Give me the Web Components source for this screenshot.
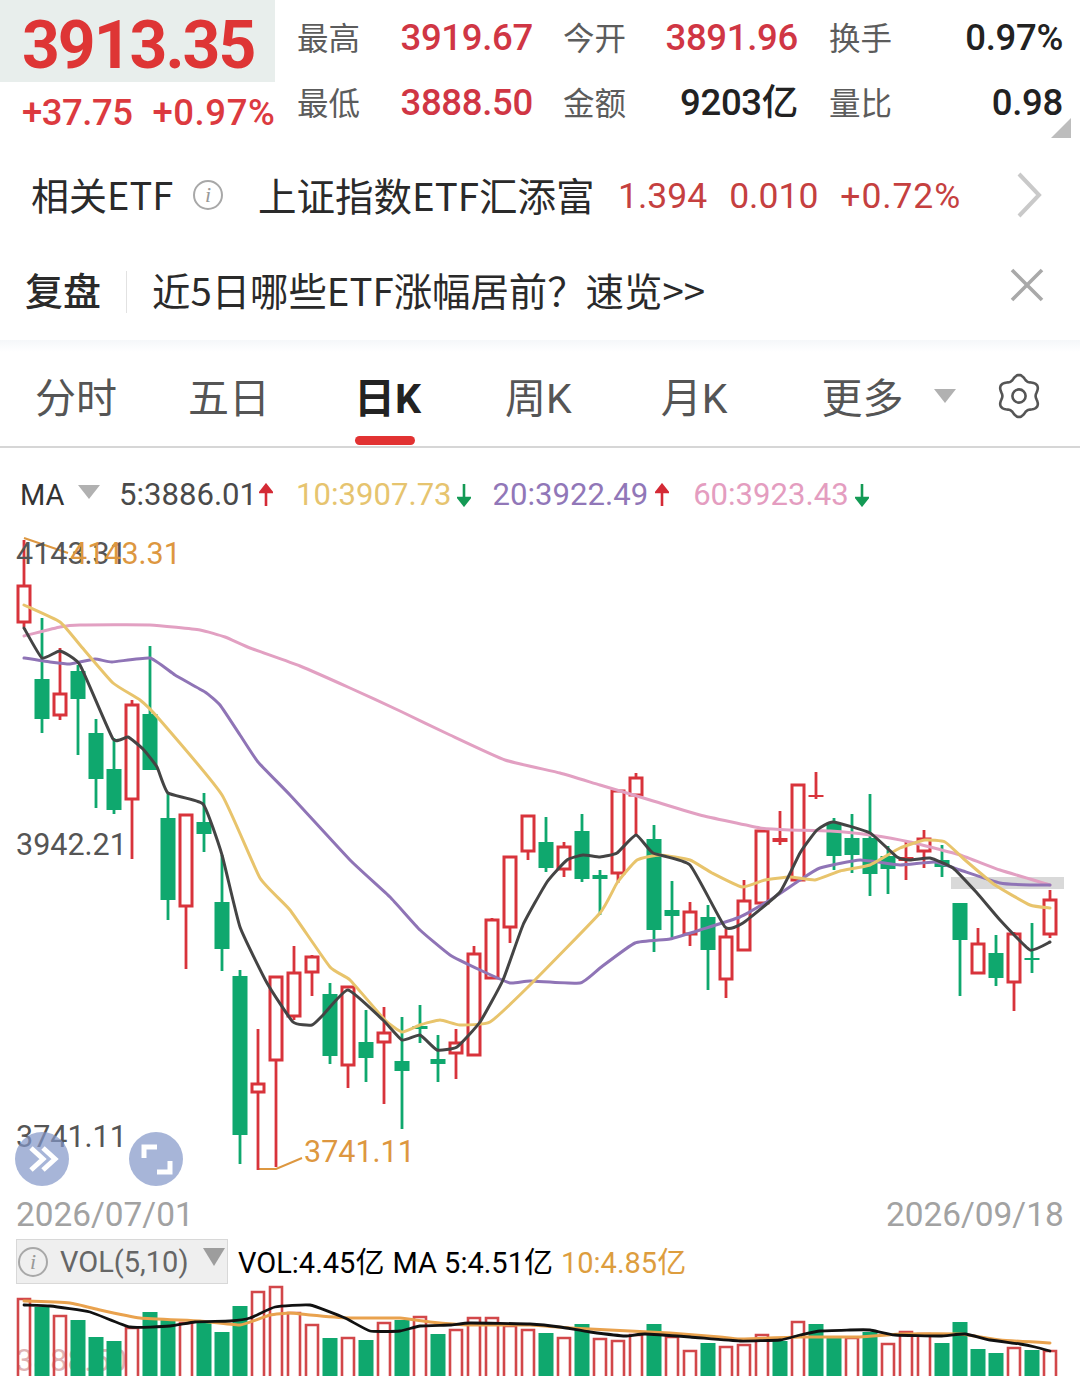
<!DOCTYPE html>
<html lang="zh">
<head>
<meta charset="utf-8">
<title>上证指数</title>
<style>
    html, body {
        margin: 0;
        background: #fff;
        width: 1080px;
        height: 1376px;
        overflow: hidden;
        font-family: Roboto, "Noto Sans CJK SC", sans-serif;
    }
    quote-panel, link-row, period-tabs, ma-legend, kline-chart, vol-legend, vol-chart { width: 1080px; }
</style>
</head>
<body>
    <quote-panel></quote-panel>
    <link-row kind="etf" label="相关ETF" name="上证指数ETF汇添富">
        <span>1.394</span><span>0.010</span><span class="wide">+0.72%</span>
    </link-row>
    <link-row kind="review" label="复盘" name="近5日哪些ETF涨幅居前？速览&gt;&gt;"></link-row>
    <period-tabs></period-tabs>
    <ma-legend></ma-legend>
    <kline-chart>
        <chart-label x="16" y="6" color="#555">4143.31</chart-label>
        <chart-label x="70" y="6" color="#dd9740">4143.31</chart-label>
        <chart-label x="16" y="297" color="#555">3942.21</chart-label>
        <chart-label x="16" y="589" color="#555">3741.11</chart-label>
        <chart-label x="304" y="604" color="#dd9740">3741.11</chart-label>
        <chart-label x="16" y="667" color="#a2a2a2" size="33.4">2026/07/01</chart-label>
        <chart-label x="886" y="667" color="#a2a2a2" size="33.4">2026/09/18</chart-label>
        <round-button x="15" y="604" icon="forward"></round-button>
        <round-button x="129" y="604" icon="expand"></round-button>
    </kline-chart>
    <vol-legend></vol-legend>
    <vol-chart></vol-chart>

<script>
// Helper variables.
const RED = '#d8333b';
const GREEN = '#0fa86e';
const CJK = '"Noto Sans CJK SC", sans-serif';
const NUM = 'Roboto, "Noto Sans CJK SC", sans-serif';

// x of candle i is 24 + 18 * i. [kind, bodyTop, bodyBottom, wickTop, wickBottom]
const candles = [
    ['r',586,622,540,627],['g',679,719,618,733],['r',694,715,648,720],['g',671,699,665,755],
    ['g',733,779,719,808],['g',769,810,738,814],['r',705,799,700,859],['g',714,770,646,770],
    ['g',818,900,792,920],['r',815,906,815,969],['g',822,834,793,852],['g',902,949,855,971],
    ['g',976,1135,970,1164],['r',1084,1092,1029,1170],['r',977,1060,977,1167],['r',973,1016,946,1020],
    ['r',957,972,955,996],['g',994,1056,983,1064],['r',987,1065,987,1088],['g',1042,1058,1010,1082],
    ['r',1033,1042,1007,1104],['g',1061,1071,1017,1129],['g',1026,1029,1005,1043],['g',1059,1064,1035,1082],
    ['r',1043,1053,1029,1079],['r',954,1055,946,1055],['r',920,978,918,978],['r',857,927,857,943],
    ['r',816,851,816,860],['g',842,868,817,872],['r',847,869,842,877],['g',831,879,814,882],
    ['g',875,879,870,915],['r',791,873,791,883],['r',778,795,773,835],['g',839,930,825,952],
    ['g',910,916,881,937],['r',912,934,902,946],['g',917,950,905,990],['r',937,979,929,998],
    ['r',901,950,880,950],['r',831,903,831,903],['r',838,842,811,845],['r',785,880,785,880],
    ['r',795,797,772,799],['g',823,856,818,870],['g',838,855,814,873],['g',838,874,794,896],
    ['g',856,869,846,894],['r',857,861,842,880],['r',839,851,830,868],['g',860,867,845,877],
    ['g',903,940,903,996],['r',944,973,928,973],['g',953,978,935,986],['r',934,982,932,1011],
    ['g',958,960,923,973],['r',900,934,890,938]
];

const maLines = [
    { color: '#e2a0c2', points: [[24,636],[60,627],[80,625],[150,625],[200,630],[225,637],[250,648],[300,666],[350,688],[400,711],[450,735],[505,760],[560,773],[600,785],[650,800],[700,815],[760,828],[790,830],[830,831],[870,835],[910,842],[960,855],[1000,870],[1050,885]] },
    { color: '#8f74b6', points: [[24,658],[50,662],[70,664],[95,659],[112,662],[150,658],[175,675],[205,692],[220,705],[240,735],[258,762],[290,795],[350,860],[390,897],[420,930],[450,955],[480,970],[510,983],[530,981],[580,983],[600,968],[635,943],[670,939],[700,930],[740,917],[770,900],[800,880],[820,868],[860,860],[900,865],[935,862],[960,870],[1000,883],[1030,885],[1050,885]] },
    { color: '#e8c46c', points: [[24,605],[60,622],[80,645],[113,683],[140,700],[160,720],[222,795],[260,878],[290,910],[330,967],[350,980],[385,1020],[402,1032],[420,1025],[440,1020],[460,1025],[490,1022],[530,985],[600,913],[617,883],[637,860],[660,855],[690,860],[712,873],[742,887],[765,880],[790,877],[815,880],[840,871],[870,865],[900,848],[925,840],[945,842],[965,860],[995,885],[1030,905],[1050,908]] },
    { color: '#444444', points: [[24,628],[42,658],[60,651],[80,665],[113,739],[128,737],[143,749],[157,767],[168,793],[203,804],[222,855],[240,927],[267,983],[293,1022],[312,1025],[323,1015],[348,990],[383,1020],[402,1040],[420,1035],[437,1050],[457,1047],[480,1022],[503,980],[523,925],[547,882],[567,860],[583,855],[600,857],[617,853],[636,835],[653,853],[690,865],[725,927],[743,923],[780,892],[800,853],[817,830],[833,822],[870,833],[897,857],[910,860],[930,858],[953,868],[977,893],[1000,920],[1030,950],[1050,942]] }
];

// [kind, top] for each volume bar, same x as the candles.
const volumes = [
    ['r',1299],['g',1307],['r',1316],['g',1320],['g',1337],['g',1341],['r',1328],['g',1312],['g',1320],['r',1323],
    ['g',1323],['g',1332],['g',1306],['r',1292],['r',1287],['r',1313],['r',1325],['g',1338],['r',1338],['g',1340],
    ['r',1323],['g',1320],['r',1317],['g',1334],['r',1330],['r',1318],['r',1318],['r',1326],['r',1330],['g',1333],
    ['r',1338],['g',1324],['r',1339],['r',1341],['r',1335],['g',1324],['r',1337],['r',1351],['g',1343],['r',1347],
    ['r',1345],['r',1335],['g',1341],['r',1322],['g',1324],['g',1337],['r',1338],['g',1332],['r',1344],['r',1332],
    ['r',1334],['g',1343],['g',1322],['g',1349],['g',1353],['r',1348],['g',1350],['r',1351]
];

const volLines = [
    { color: '#e9a24e', width: 3, points: [[24,1301],[70,1303],[100,1310],[140,1318],[200,1321],[240,1325],[270,1315],[290,1313],[310,1315],[350,1318],[400,1318],[430,1322],[470,1325],[530,1325],[570,1328],[630,1331],[670,1333],[720,1337],[740,1339],[800,1337],[860,1337],[900,1334],[960,1334],[1000,1340],[1050,1343]] },
    { color: '#111111', width: 2.8, points: [[24,1305],[50,1306],[90,1312],[130,1327],[170,1326],[195,1322],[230,1321],[250,1318],[275,1307],[310,1305],[345,1318],[370,1331],[400,1331],[420,1326],[450,1325],[470,1323],[530,1324],[560,1327],[590,1332],[625,1336],[645,1334],[690,1337],[740,1341],[780,1340],[800,1335],[820,1331],[850,1330],[870,1330],[895,1335],[940,1336],[965,1334],[990,1340],[1020,1344],[1035,1347],[1050,1351]] }
];

// Helper functions.
function smoothLine(points, color, width) {
    // Low tension: the moving averages only round off their corners a little.
    const k = 14;
    let d = `M${points[0].join(' ')}`;
    for (let i = 0; i < points.length - 1; i++) {
        const p0 = points[Math.max(i - 1, 0)];
        const p1 = points[i];
        const p2 = points[i + 1];
        const p3 = points[Math.min(i + 2, points.length - 1)];
        const c1 = [p1[0] + (p2[0] - p0[0]) / k, p1[1] + (p2[1] - p0[1]) / k];
        const c2 = [p2[0] - (p3[0] - p1[0]) / k, p2[1] - (p3[1] - p1[1]) / k];
        d += `C${c1[0].toFixed(1)} ${c1[1].toFixed(1)} ${c2[0].toFixed(1)} ${c2[1].toFixed(1)} ${p2[0]} ${p2[1]}`;
    }
    return `<path d="${d}" fill="none" stroke="${color}" stroke-width="${width}" stroke-linecap="round" stroke-linejoin="round"/>`;
}

function drawCandle(candle, i) {
    const [kind, top, bottom, wickTop, wickBottom] = candle;
    const x = 24 + 18 * i;
    const color = kind === 'r' ? RED : GREEN;
    const wick = `<path d="M${x} ${wickTop}V${top}M${x} ${bottom}V${wickBottom}" stroke="${color}" stroke-width="2.8"/>`;
    if (kind === 'g' || bottom - top < 5) {
        return wick + `<rect x="${x - 7.5}" y="${top}" width="15" height="${bottom - top}" fill="${color}"/>`;
    }
    return wick + `<rect x="${x - 6}" y="${top}" width="12" height="${bottom - top}" fill="none" stroke="${color}" stroke-width="3"/>`;
}

function drawBar(bar, i) {
    const [kind, top] = bar;
    const x = 24 + 18 * i;
    if (kind === 'g') {
        return `<rect x="${x - 7.5}" y="${top}" width="15" height="${1376 - top}" fill="${GREEN}"/>`;
    }
    return `<path d="M${x - 6} 1380V${top}H${x + 6}V1380" fill="none" stroke="#d2474a" stroke-width="2.6"/>`;
}

function gearPath(cx, cy) {
    let d = '';
    for (let i = 0; i <= 120; i++) {
        const a = i / 120 * Math.PI * 2;
        const r = 18.8 - 2.2 * Math.cos(6 * a);
        d += `${i ? 'L' : 'M'}${(cx + r * Math.cos(a)).toFixed(1)} ${(cy + r * Math.sin(a)).toFixed(1)}`;
    }
    return d + 'Z';
}

// Define classes.
class InfoIcon extends HTMLElement {
    constructor() {
        super();
        this.attachShadow({ mode: 'open' }).innerHTML = `
            <style>
                :host {
                    display: inline-flex;
                    width: var(--size, 28px);
                    height: var(--size, 28px);
                    box-sizing: border-box;
                    border: 2px solid #a8a8a8;
                    border-radius: 50%;
                    align-items: center;
                    justify-content: center;
                    background: #fff;
                }
                i { font: italic 22px/1 "Liberation Serif", serif; color: #999; }
            </style>
            <i>i</i>`;
    }
}

class QuotePanel extends HTMLElement {
    constructor() {
        super();
        const cell = (label, value, dark, gap) => `
            <span class="label" style="margin-left:${gap || 0}px">${label}</span>
            <span class="value ${dark ? 'dark' : ''}">${value}</span>`;
        this.attachShadow({ mode: 'open' }).innerHTML = `
            <style>
                :host { display: flex; height: 150px; position: relative; }
                .left { width: 275px; flex: none; }
                .price {
                    height: 82px;
                    background: #e8eeec;
                    box-sizing: border-box;
                    padding-left: 22px;
                    font: 700 66px/92px ${NUM};
                    letter-spacing: -2px;
                    color: #de3535;
                }
                .change {
                    display: flex;
                    gap: 20px;
                    padding: 9px 0 0 22px;
                    font: 500 36.5px/44px ${NUM};
                    letter-spacing: -0.5px;
                    color: #dc3a3f;
                }
                .change span:last-child { letter-spacing: 0.6px; }
                .grid {
                    display: grid;
                    margin: 5px 0 0 22px;
                    grid-template-columns: 64px 172px 94px 171px 95px 170px;
                    grid-auto-rows: 65px;
                    align-items: center;
                }
                .label { font: 400 31.5px/40px ${CJK}; color: #5c5c5c; white-space: nowrap; margin-bottom: 4px; }
                .value {
                    font: 500 36.5px/44px ${NUM};
                    letter-spacing: -0.3px;
                    color: #d03644;
                    text-align: right;
                }
                .value.dark { color: #222; }
                .corner {
                    position: absolute;
                    left: 1051px;
                    top: 118px;
                    width: 20px;
                    height: 20px;
                    background: #bdbdbd;
                    clip-path: polygon(100% 0, 100% 100%, 0 100%);
                }
            </style>
            <div class="left">
                <div class="price">3913.35</div>
                <div class="change"><span>+37.75</span><span>+0.97%</span></div>
            </div>
            <div class="grid">
                ${cell('最高', '3919.67')}${cell('今开', '3891.96', false, 30)}${cell('换手', '0.97%', true, 31)}
                ${cell('最低', '3888.50')}${cell('金额', '9203亿', true, 30)}${cell('量比', '0.98', true, 31)}
            </div>
            <div class="corner"></div>`;
    }
}

class LinkRow extends HTMLElement {
    constructor() {
        super();
        this.attachShadow({ mode: 'open' });
    }
    connectedCallback() {
        const label = this.getAttribute('label');
        const name = this.getAttribute('name').replace('>>', '&gt;&gt;');
        const etf = this.getAttribute('kind') === 'etf';
        this.shadowRoot.innerHTML = etf ? `
            <style>
                :host { display: flex; align-items: center; height: 93px; padding-left: 31px; box-sizing: border-box; color: #2a2a2a; }
                .label { font: 400 38px/48px ${CJK}; width: 162px; white-space: nowrap; margin-bottom: 6px; }
                .name { font: 400 38.5px/48px ${CJK}; margin-left: 35px; white-space: nowrap; width: 360px; margin-bottom: 6px; }
                ::slotted(span) { font: 400 35.5px/48px ${NUM}; color: #c5403f; }
                ::slotted(.wide) { letter-spacing: 0.9px; }
                .values { display: flex; gap: 22px; margin-bottom: 2px; }
                info-icon { --size: 30px; margin-bottom: 4px; }
                svg { position: absolute; left: 1010px; width: 40px; height: 52px; margin-top: -4px; }
            </style>
            <span class="label">${label}</span>
            <info-icon></info-icon>
            <span class="name">${name}</span>
            <div class="values"><slot></slot></div>
            <svg viewBox="0 0 40 52"><polyline points="9,5 29,26 9,47" fill="none" stroke="#c9c9c9" stroke-width="4"/></svg>
        ` : `
            <style>
                :host { display: flex; align-items: center; height: 97px; padding-left: 25px; box-sizing: border-box; color: #2a2a2a; }
                .label { font: 500 38px/48px ${CJK}; width: 76px; white-space: nowrap; margin-bottom: 6px; }
                .rule { width: 1px; height: 42px; background: #e2e2e2; margin: 0 25px 0 25px; }
                .name { font: 400 38.4px/48px ${CJK}; white-space: nowrap; margin-bottom: 6px; }
                svg { position: absolute; left: 1005px; width: 44px; height: 44px; margin-top: -14px; }
            </style>
            <span class="label">${label}</span>
            <span class="rule"></span>
            <span class="name">${name}</span>
            <svg viewBox="0 0 44 44"><path d="M7 7L37 37M37 7L7 37" stroke="#a9a9a9" stroke-width="3.6"/></svg>`;
    }
}

class PeriodTabs extends HTMLElement {
    constructor() {
        super();
        const tab = (text, gap, active) => `<span class="tab ${active ? 'active' : ''}" style="margin-left:${gap}px">${text}</span>`;
        this.attachShadow({ mode: 'open' }).innerHTML = `
            <style>
                :host {
                    display: flex;
                    align-items: center;
                    height: 108px;
                    padding-top: 12px;
                    box-sizing: border-box;
                    border-bottom: 2px solid #d6d6d6;
                    position: relative;
                    background: linear-gradient(#f5f7f9 0, #fff 12px);
                    color: #555;
                }
                .tab { font: 400 41px/56px Roboto, ${CJK}; white-space: nowrap; position: relative; }
                .active { font-weight: 700; color: #222; }
                .active::after {
                    content: "";
                    position: absolute;
                    left: 1px;
                    width: 60px;
                    top: 65px;
                    height: 9px;
                    border-radius: 5px;
                    background: #e23232;
                }
                .caret { width: 0; height: 0; margin-left: 30px; border: 11px solid transparent; border-bottom: 0; border-top: 14px solid #b1b1b1; margin-bottom: 6px; }
                svg { width: 46px; height: 46px; margin-left: 40px; margin-bottom: 6px; }
            </style>
            ${tab('分时', 35)}${tab('五日', 71)}${tab('日K', 84, true)}${tab('周K', 84)}${tab('月K', 89)}${tab('更多', 94)}
            <span class="caret"></span>
            <svg viewBox="0 0 46 46">
                <path d="${gearPath(23, 23)}" fill="none" stroke="#555" stroke-width="2.6"/>
                <circle cx="23" cy="23" r="6.6" fill="none" stroke="#555" stroke-width="2.6"/>
            </svg>`;
    }
}

class MaLegend extends HTMLElement {
    constructor() {
        super();
        const item = (text, color, up, gap, arrowGap) => `
            <span style="color:${color};margin-left:${gap}px">${text}</span>
            <svg class="arrow" style="margin-left:${arrowGap}px" viewBox="0 0 14 24"><path d="M7 ${up ? 23 : 1}V${up ? 3 : 21}M1.5 ${up ? 9 : 15}L7 ${up ? 2 : 22}L12.5 ${up ? 9 : 15}Z" stroke="${up ? '#d42a35' : '#149a55'}" stroke-width="2.6" fill="${up ? '#d42a35' : '#149a55'}"/></svg>`;
        this.attachShadow({ mode: 'open' }).innerHTML = `
            <style>
                :host {
                    display: flex;
                    align-items: center;
                    height: 80px;
                    padding: 14px 0 0 20px;
                    box-sizing: border-box;
                    font: 400 31.1px/40px ${NUM};
                }
                .name { color: #333; font-size: 29px; width: 44px; }
                .caret { width: 0; height: 0; margin-left: 14px; border: 11px solid transparent; border-bottom: 0; border-top: 14px solid #b1b1b1; margin-bottom: 6px; }
                .arrow { width: 14px; height: 24px; flex: none; }
            </style>
            <span class="name">MA</span>
            <span class="caret"></span>
            ${item('5:3886.01', '#4a4a4a', true, 19, 2)}
            ${item('10:3907.73', '#e6c46f', false, 23, 5)}
            ${item('20:3922.49', '#9177b8', true, 22, 7)}
            ${item('60:3923.43', '#e49dc0', false, 24, 6)}`;
    }
}

class ChartLabel extends HTMLElement {
    constructor() {
        super();
        this.attachShadow({ mode: 'open' }).innerHTML = `
            <style>
                :host { position: absolute; white-space: nowrap; font: 400 30.5px/40px ${NUM}; }
            </style>
            <slot></slot>`;
    }
    connectedCallback() {
        this.style.left = this.getAttribute('x') + 'px';
        this.style.top = this.getAttribute('y') + 'px';
        this.style.color = this.getAttribute('color');
        if (this.getAttribute('size')) {
            this.style.fontSize = this.getAttribute('size') + 'px';
        }
    }
}

class RoundButton extends HTMLElement {
    constructor() {
        super();
        this.attachShadow({ mode: 'open' });
    }
    connectedCallback() {
        this.style.left = this.getAttribute('x') + 'px';
        this.style.top = this.getAttribute('y') + 'px';
        const icon = this.getAttribute('icon') === 'forward'
            ? '<path d="M16 18L28 29L16 40M28 18L40 29L28 40"/>'
            : '<path d="M15 28V17H28M28 42H41V31"/>';
        this.shadowRoot.innerHTML = `
            <style>
                :host { position: absolute; width: 54px; height: 54px; border-radius: 50%; background: rgba(130,150,200,0.7); }
                svg { display: block; margin-top: -2px; }
            </style>
            <svg viewBox="0 0 54 56" width="54" height="56" fill="none" stroke="#fff" stroke-width="5">${icon}</svg>`;
    }
}

class KlineChart extends HTMLElement {
    constructor() {
        super();
        const lines = maLines.map(l => smoothLine(l.points, l.color, 3)).join('');
        this.attachShadow({ mode: 'open' }).innerHTML = `
            <style>
                :host { display: block; position: relative; height: 708px; }
                svg { display: block; position: absolute; left: 0; top: 0; }
            </style>
            <svg width="1080" height="708" viewBox="0 528 1080 708">
                <rect x="951" y="877" width="113" height="12" fill="#d9d9d9"/>
                <path d="M24 538L68 553M258 1169H276L302 1158" fill="none" stroke="#dd9740" stroke-width="2"/>
                ${candles.map(drawCandle).join('')}
                ${lines}
            </svg>
            <slot></slot>`;
    }
}

class VolLegend extends HTMLElement {
    constructor() {
        super();
        this.attachShadow({ mode: 'open' }).innerHTML = `
            <style>
                :host {
                    display: flex;
                    align-items: flex-start;
                    height: 48px;
                    padding: 3px 0 0 16px;
                    box-sizing: border-box;
                    font: 400 29px/42px ${NUM};
                    color: #000;
                }
                .box {
                    display: flex;
                    align-items: center;
                    width: 212px;
                    height: 45px;
                    box-sizing: border-box;
                    padding-left: 1px;
                    background: #efefef;
                    border: 1px solid #d8d8d8;
                    color: #666;
                    margin-right: 10px;
                    flex: none;
                }
                info-icon { --size: 30px; background: transparent; margin-right: 12px; flex: none; }
                .caret { width: 0; height: 0; margin-left: 15px; border: 11px solid transparent; border-bottom: 0; border-top: 18px solid #9d9d9d; margin-bottom: 10px; }
                span { white-space: nowrap; }
                .text { margin-top: 3px; }
                .sep { margin-left: 8px; }
                .orange { color: #dd9d3e; margin-left: 8px; }
            </style>
            <div class="box"><info-icon></info-icon><span>VOL(5,10)</span><span class="caret"></span></div>
            <span class="text">VOL:4.45亿</span><span class="text sep">MA 5:4.51亿</span><span class="text orange">10:4.85亿</span>`;
    }
}

class VolChart extends HTMLElement {
    constructor() {
        super();
        this.attachShadow({ mode: 'open' }).innerHTML = `
            <style>
                :host { display: block; position: relative; height: 92px; overflow: hidden; }
                svg { display: block; position: absolute; left: 0; top: 0; }
                .axis { position: absolute; left: 16px; top: 62px; font: 400 30.5px/30px ${NUM}; color: #dfb4b4; }
            </style>
            <div class="axis">3888.50</div>
            <svg width="1080" height="92" viewBox="0 1284 1080 92">
                ${volumes.map(drawBar).join('')}
                ${volLines.map(l => smoothLine(l.points, l.color, l.width)).join('')}
            </svg>`;
    }
}

// Add elements to the list of customElements.
customElements.define('info-icon', InfoIcon);
customElements.define('quote-panel', QuotePanel);
customElements.define('link-row', LinkRow);
customElements.define('period-tabs', PeriodTabs);
customElements.define('ma-legend', MaLegend);
customElements.define('chart-label', ChartLabel);
customElements.define('round-button', RoundButton);
customElements.define('kline-chart', KlineChart);
customElements.define('vol-legend', VolLegend);
customElements.define('vol-chart', VolChart);
</script>
</body>
</html>
